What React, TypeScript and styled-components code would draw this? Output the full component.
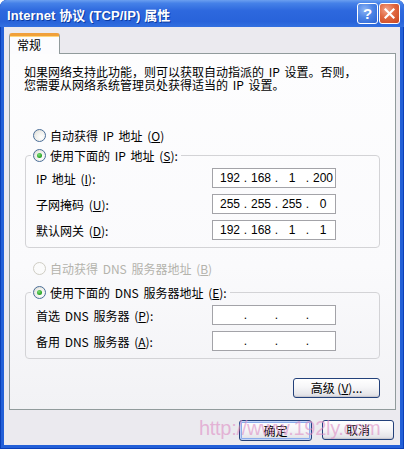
import React from "react";
import styled, { createGlobalStyle } from "styled-components";

const GlobalStyle = createGlobalStyle`
  html, body {
    margin: 0;
    padding: 0;
    background: #ffffff;
  }
  body {
    font-family: "Noto Sans CJK SC", sans-serif;
    font-size: 12px;
    color: #000;
  }
  u {
    text-decoration: underline;
    text-underline-offset: 1px;
  }
`;

const Window = styled.div`
  position: relative;
  width: 404px;
  height: 449px;
  display: flex;
  flex-direction: column;
  background: #2360d8;
  border-radius: 7px 7px 0 0;
  overflow: hidden;
  box-shadow: inset 1px 0 0 #0a3fb8, inset -1px 0 0 #0a3fb8, inset 0 -1px 0 #0a3fb8;
`;

const TitleBar = styled.div`
  height: 27px;
  flex: none;
  display: flex;
  align-items: center;
  padding: 0 4px 0 7px;
  background: linear-gradient(
    180deg,
    #6b9ff0 0%,
    #4581e8 12%,
    #2d68de 40%,
    #2863da 80%,
    #3270e0 100%
  );
`;

const Title = styled.div`
  flex: 1;
  color: #fff;
  font-family: "Liberation Sans", "Noto Sans CJK SC", sans-serif;
  font-weight: bold;
  font-size: 13px;
  letter-spacing: 0.1px;
  text-shadow: 1px 1px 0 #0b3aa0;
  padding-top: 1px;
`;

const CaptionButton = styled.div<{ $kind: "help" | "close" }>`
  width: 21px;
  height: 21px;
  box-sizing: border-box;
  margin-left: 1px;
  border: 1px solid #fff;
  border-radius: 3px;
  display: flex;
  align-items: center;
  justify-content: center;
  color: #fff;
  font-family: "Liberation Sans", sans-serif;
  font-weight: bold;
  font-size: 15px;
  background: ${({ $kind }) =>
    $kind === "close"
      ? "radial-gradient(circle at 35% 30%, #f3a58c 0%, #e0673f 45%, #c8451f 100%)"
      : "radial-gradient(circle at 35% 30%, #8fb5f5 0%, #4d85e6 45%, #2c63d2 100%)"};
`;

const Body = styled.div`
  flex: 1;
  display: flex;
  flex-direction: column;
  margin: 0 4px 4px 4px;
  padding: 6px 4px 4px 5px;
  background: #ebeaef;
`;

const TabRow = styled.div`
  display: flex;
  position: relative;
  z-index: 1;
  margin-bottom: -1px;
`;

const Tab = styled.div`
  height: 21px;
  box-sizing: border-box;
  padding: 1px 18px 0 7px;
  border: 1px solid #919b9c;
  border-top: 3px solid #f0a03a;
  border-bottom: none;
  border-radius: 3px 3px 0 0;
  background: #fcfcfe;
  line-height: 16px;
  box-shadow: inset 0 1px 0 #ffd67a;
`;

const Panel = styled.div`
  height: 357px;
  box-sizing: border-box;
  display: flex;
  flex-direction: column;
  padding: 11px 15px 12px 14px;
  border: 1px solid #919b9c;
  background: linear-gradient(180deg, #fdfdfe 0%, #fafafc 60%, #f2f2f5 100%);
`;

const Description = styled.p`
  margin: 0 0 36px 0;
  line-height: 13px;
  white-space: nowrap;
  word-spacing: 2px;
`;

const RadioRow = styled.label<{ $disabled?: boolean; $legend?: boolean }>`
  display: flex;
  align-items: center;
  height: 16px;
  gap: 4px;
  padding-left: ${({ $legend }) => ($legend ? "2px" : "9px")};
  padding-right: ${({ $legend }) => ($legend ? "3px" : "0")};
  color: ${({ $disabled }) => ($disabled ? "#b4b3ac" : "#000")};
  white-space: nowrap;
  word-spacing: 2px;
`;

const RadioCircle = styled.span<{ $checked?: boolean; $disabled?: boolean }>`
  width: 13px;
  height: 13px;
  box-sizing: border-box;
  flex: none;
  border-radius: 50%;
  border: 1px solid ${({ $disabled }) => ($disabled ? "#cfcdc4" : "#4a6e98")};
  background: ${({ $disabled }) =>
    $disabled
      ? "#fbfbfb"
      : "radial-gradient(circle at 65% 65%, #ffffff 0%, #eeeeea 55%, #d6d4c9 100%)"};
  display: flex;
  align-items: center;
  justify-content: center;
  &::after {
    content: "";
    display: ${({ $checked }) => ($checked ? "block" : "none")};
    width: 5px;
    height: 5px;
    border-radius: 50%;
    background: radial-gradient(circle at 40% 35%, #7ee07a 0%, #2ea82b 60%, #1c861a 100%);
  }
`;

const Group = styled.fieldset<{ $gapTop: number }>`
  margin: ${({ $gapTop }) => $gapTop}px 0 0 1px;
  padding: 5px 7px 7px 10px;
  border: 1px solid #d3d3d6;
  border-radius: 4px;
  display: flex;
  flex-direction: column;
  gap: 6px;
  min-width: 0;
`;

const Legend = styled.legend`
  padding: 0;
  margin-left: -5px;
  background: transparent;
`;

const FieldRow = styled.div`
  display: grid;
  grid-template-columns: 176px 124px;
  align-items: center;
  height: 20px;
`;

const FieldLabel = styled.span`
  white-space: nowrap;
  word-spacing: 2px;
`;

const IpBox = styled.div`
  width: 124px;
  height: 20px;
  box-sizing: border-box;
  border: 1px solid #a3a3a8;
  background: #fff;
  display: grid;
  grid-template-columns: 4px 26px 5px 26px 5px 26px 5px 26px;
  align-items: center;
  font-family: "Liberation Sans", sans-serif;
  font-size: 12px;
  color: #000;
`;

const Octet = styled.span`
  text-align: center;
`;

const Dot = styled.span`
  text-align: center;
`;

const RadioStandalone = styled.div<{ $gapTop: number }>`
  margin-top: ${({ $gapTop }) => $gapTop}px;
`;

const AdvancedRow = styled.div`
  display: flex;
  justify-content: flex-end;
  margin-top: 19px;
`;

const XpButton = styled.button<{ $width: number; $default?: boolean }>`
  width: ${({ $width }) => $width}px;
  height: ${({ $default }) => ($default ? 21 : 20)}px;
  box-sizing: border-box;
  padding: 0;
  border: 1px solid #23417a;
  border-radius: 3px;
  font-family: "Noto Sans CJK SC", sans-serif;
  font-size: 12px;
  color: #000;
  background: linear-gradient(180deg, #ffffff 0%, #f6f6f8 45%, #e6e6ea 85%, #d6d5dc 100%);
  box-shadow: ${({ $default }) =>
    $default
      ? "inset 0 0 0 1px #c4d6f7, inset 0 0 0 2px #8bacea"
      : "inset 0 -1px 0 #c9c8d0"};
  line-height: 16px;
`;

const FooterRow = styled.div`
  display: flex;
  justify-content: flex-end;
  gap: 10px;
  margin-top: 10px;
  margin-right: 2px;
`;

const Watermark = styled.div`
  position: absolute;
  left: 199px;
  top: 417px;
  font-family: "Liberation Sans", sans-serif;
  font-size: 20px;
  color: rgba(222, 140, 196, 0.6);
  letter-spacing: -0.3px;
  pointer-events: none;
  white-space: nowrap;
`;

type IpProps = { parts: string[] };

const IpField = ({ parts }: IpProps) => (
  <IpBox>
    <span />
    {parts.map((p, i) => (
      <React.Fragment key={i}>
        {i > 0 && <Dot>.</Dot>}
        <Octet>{p}</Octet>
      </React.Fragment>
    ))}
  </IpBox>
);

type RadioProps = {
  checked?: boolean;
  disabled?: boolean;
  legend?: boolean;
  children: React.ReactNode;
};

const Radio = ({ checked, disabled, legend, children }: RadioProps) => (
  <RadioRow $disabled={disabled} $legend={legend}>
    <RadioCircle $checked={checked} $disabled={disabled} />
    <span>{children}</span>
  </RadioRow>
);

const ipRows = [
  { label: <>IP 地址 (<u>I</u>):</>, parts: ["192", "168", "1", "200"] },
  { label: <>子网掩码 (<u>U</u>):</>, parts: ["255", "255", "255", "0"] },
  { label: <>默认网关 (<u>D</u>):</>, parts: ["192", "168", "1", "1"] },
];

const dnsRows = [
  { label: <>首选 DNS 服务器 (<u>P</u>):</>, parts: ["", "", "", ""] },
  { label: <>备用 DNS 服务器 (<u>A</u>):</>, parts: ["", "", "", ""] },
];

const HelpGlyph = () => <span style={{ marginTop: -1 }}>?</span>;

const CloseGlyph = () => (
  <svg width="11" height="11" viewBox="0 0 11 11">
    <path d="M1.5 1.5 L9.5 9.5 M9.5 1.5 L1.5 9.5" stroke="#fff" strokeWidth="2.2" strokeLinecap="square" />
  </svg>
);

export default function App() {
  return (
    <>
      <GlobalStyle />
      <Window>
        <TitleBar>
          <Title>Internet 协议 (TCP/IP) 属性</Title>
          <CaptionButton $kind="help">
            <HelpGlyph />
          </CaptionButton>
          <CaptionButton $kind="close">
            <CloseGlyph />
          </CaptionButton>
        </TitleBar>
        <Body>
          <TabRow>
            <Tab>常规</Tab>
          </TabRow>
          <Panel>
            <Description>
              如果网络支持此功能，则可以获取自动指派的 IP 设置。否则，
              <br />
              您需要从网络系统管理员处获得适当的 IP 设置。
            </Description>
            <Radio>
              自动获得 IP 地址 (<u>O</u>)
            </Radio>
            <Group $gapTop={4}>
              <Legend>
                <Radio checked legend>
                  使用下面的 IP 地址 (<u>S</u>):
                </Radio>
              </Legend>
              {ipRows.map((r, i) => (
                <FieldRow key={i}>
                  <FieldLabel>{r.label}</FieldLabel>
                  <IpField parts={r.parts} />
                </FieldRow>
              ))}
            </Group>
            <RadioStandalone $gapTop={12}>
              <Radio disabled>
                自动获得 DNS 服务器地址 (<u>B</u>)
              </Radio>
            </RadioStandalone>
            <Group $gapTop={8}>
              <Legend>
                <Radio checked legend>
                  使用下面的 DNS 服务器地址 (<u>E</u>):
                </Radio>
              </Legend>
              {dnsRows.map((r, i) => (
                <FieldRow key={i}>
                  <FieldLabel>{r.label}</FieldLabel>
                  <IpField parts={r.parts} />
                </FieldRow>
              ))}
            </Group>
            <AdvancedRow>
              <XpButton $width={87}>
                高级 (<u>V</u>)...
              </XpButton>
            </AdvancedRow>
          </Panel>
          <FooterRow>
            <XpButton $width={73} $default>
              确定
            </XpButton>
            <XpButton $width={72}>取消</XpButton>
          </FooterRow>
        </Body>
        <Watermark>http://www.192ly.com</Watermark>
      </Window>
    </>
  );
}
